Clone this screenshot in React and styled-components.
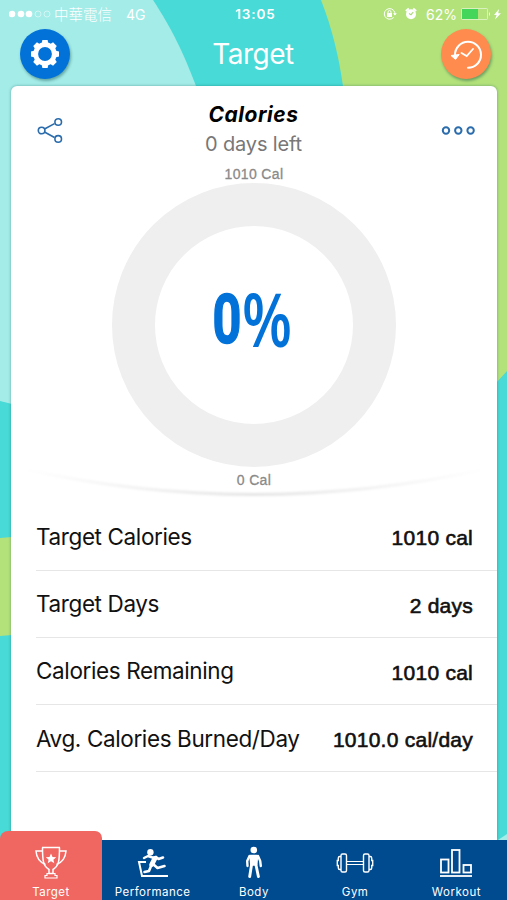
import React from "react";
import styled, { createGlobalStyle } from "styled-components";

const GlobalStyle = createGlobalStyle`
  * {
    box-sizing: border-box;
  }
  body {
    margin: 0;
    overflow: hidden;
    font-family: Inter, "Noto Sans CJK TC", sans-serif;
  }
  svg {
    display: block;
  }
`;
const Screen = styled.div`
  position: relative;
  display: flex;
  flex-direction: column;
  width: 507px;
  height: 900px;
  overflow: hidden;
  background: #48dad6;
`;
const Backdrop = styled.svg`
  position: absolute;
  top: 0;
  left: 0;
`;
const StatusBar = styled.div`
  position: relative;
  display: grid;
  grid-template-columns: 1fr auto 1fr;
  align-items: center;
  height: 28px;
  padding: 0 5px 0 9px;
  color: white;
  font-size: 13px;
`;
const StatusSide = styled.div`
  display: flex;
  align-items: center;
  justify-content: ${(props) => (props.$end ? "flex-end" : "flex-start")};
`;
const Carrier = styled.span`
  margin: 0 14px 0 2px;
  font-family: "Noto Sans CJK TC", sans-serif;
  font-size: 14.5px;
  font-weight: 300;
  line-height: 20px;
`;
const Network = styled.span`
  font-size: 14px;
`;
const Time = styled.span`
  font-weight: 600;
  font-size: 13.5px;
  letter-spacing: 0.9px;
`;
const Percent = styled.span`
  margin: 0 4px 0 8px;
  font-size: 14px;
`;
const Header = styled.header`
  position: relative;
  display: flex;
  justify-content: space-between;
  height: 58px;
  padding: 1px 16px 0 20px;
`;
const RoundButton = styled.button`
  display: flex;
  align-items: center;
  justify-content: center;
  width: 50px;
  height: 50px;
  padding: 0;
  border: 0;
  border-radius: 50%;
  background: ${(props) => props.color};
  box-shadow: 1px 2px 3px rgba(0, 60, 60, 0.4);
`;
const Title = styled.h1`
  margin: 0 5px 0 0;
  color: white;
  font-size: 28px;
  font-weight: 400;
  line-height: 50px;
  letter-spacing: -0.5px;
`;
const Card = styled.main`
  position: relative;
  display: flex;
  flex-direction: column;
  height: 754px;
  margin: 0 10px 0 11px;
  border-radius: 6px 6px 0 0;
  background: white;
  box-shadow: 0 0 3px rgba(0, 80, 80, 0.45);
`;
const Summary = styled.section`
  display: flex;
  flex-direction: column;
  height: 417.4px;
`;
const CardTop = styled.div`
  display: flex;
  justify-content: space-between;
  height: 80px;
  padding: 0 22px 0 26px;
  > svg {
    margin-top: 31px;
  }
`;
const Heading = styled.div`
  display: flex;
  flex-direction: column;
  align-items: center;
  padding: 15px 0 0 2px;
`;
const Name = styled.h2`
  margin: 0;
  font-size: 21px;
  font-style: italic;
  font-weight: 700;
  line-height: 28px;
  letter-spacing: 0.5px;
`;
const Left = styled.span`
  color: #777;
  font-size: 20px;
  line-height: 31px;
  letter-spacing: -0.15px;
`;
const ScaleLabel = styled.span`
  height: 17px;
  color: #8a8a8a;
  font-family: "Liberation Sans", sans-serif;
  font-size: 14px;
  line-height: 17px;
  letter-spacing: 0.35px;
  text-align: center;
  -webkit-text-stroke: 0.3px #8a8a8a;
`;
const Ring = styled.div`
  display: flex;
  align-items: center;
  justify-content: center;
  align-self: center;
  width: 284px;
  height: 284px;
  margin-bottom: 5px;
  border: 43px solid #efefef;
  border-radius: 50%;
`;
const Progress = styled.div`
  display: flex;
  align-items: center;
  height: 84px;
  margin: -11px 0 0 -2px;
  color: #0272d9;
  font-size: 69px;
  line-height: 84px;
`;
const Amount = styled.span`
  display: flex;
  justify-content: center;
  width: 28px;
  font-family: Roboto, sans-serif;
  font-weight: 700;
  -webkit-text-stroke: 1.5px #0272d9;
  transform: scaleX(0.73);
`;
const Unit = styled.span`
  display: flex;
  justify-content: center;
  width: 52px;
  margin-top: -4px;
  font-family: "Open Sans", sans-serif;
  font-weight: 600;
  transform: scale(0.84, 1.07);
`;
const Curve = styled.svg`
  position: absolute;
  top: 368.5px;
  left: 0;
`;
const Row = styled.div`
  display: flex;
  align-items: center;
  justify-content: space-between;
  height: 67.2px;
  margin-left: 25px;
  padding-right: 24px;
  border-bottom: 1px solid #e6e6e6;
`;
const Label = styled.span`
  color: #111;
  font-size: 22.5px;
  letter-spacing: -0.38px;
`;
const Value = styled.span`
  padding-top: 4px;
  color: #111;
  font-family: "Liberation Sans", sans-serif;
  font-size: 21px;
  letter-spacing: 0.25px;
  -webkit-text-stroke: 0.6px #111;
`;
const TabBar = styled.nav`
  position: relative;
  display: grid;
  grid-template-columns: 102px repeat(4, 1fr);
  grid-template-rows: 60px;
  align-items: end;
  height: 60px;
  background: #004a8f;
`;
const Tab = styled.div`
  display: flex;
  flex-direction: column;
  align-items: center;
  justify-content: flex-end;
  height: ${(props) => (props.$active ? 69 : 60)}px;
  border-radius: ${(props) => (props.$active ? "8px 7px 0 0" : 0)};
  background: ${(props) => (props.$active ? "#f06661" : "none")};
  color: white;
`;
const TabLabel = styled.span`
  margin-top: 4px;
  font-size: 11.5px;
  line-height: 16px;
  letter-spacing: 0.5px;
`;

const rows = [
  { label: "Target Calories", value: "1010 cal" },
  { label: "Target Days", value: "2 days" },
  { label: "Calories Remaining", value: "1010 cal" },
  { label: "Avg. Calories Burned/Day", value: "1010.0 cal/day" },
];

const SignalDots = () => (
  <svg width="43" height="10" fill="none" stroke="white">
    {[3, 12, 20].map((x) => (
      <circle key={x} cx={x} cy="5" r="3.3" fill="white" stroke="none" />
    ))}
    <circle cx="29" cy="5" r="3" strokeWidth="0.7" opacity="0.7" />
    <circle cx="38" cy="5" r="3" strokeWidth="0.7" opacity="0.7" />
  </svg>
);

const StatusIcons = () => (
  <svg width="35" height="14" fill="none" stroke="white">
    <path d="M10.6 10.4a5.3 5.3 0 1 1 1.2-2.4" strokeWidth="1" />
    <path d="m10 6.2 1.9 2.2 1.9-2.2Z" fill="white" stroke="none" />
    <rect x="4" y="6" width="5" height="4" fill="white" stroke="none" />
    <path d="M5 6.2V5a1.5 1.5 0 0 1 3 0v1.2" />
    <circle cx="28" cy="7.3" r="5" fill="white" stroke="none" />
    <path d="m22.8 4 3-2.5M33.2 4l-3-2.5" strokeWidth="1.7" />
    <path d="M30.3 5 28 7.7l-2-1.1" stroke="#a9d975" strokeWidth="1.1" />
  </svg>
);

const Battery = () => (
  <svg width="41" height="14">
    <rect x="0.5" y="1.5" width="26" height="11" rx="1" fill="none" stroke="white" opacity="0.5" />
    <rect x="1" y="2" width="16" height="10" fill="#43d65b" />
    <path d="M28 5q2 2 0 4Z" fill="white" />
    <path d="m38 2-5 6h2.6L34 12.5l6-6.2h-2.8Z" fill="white" />
  </svg>
);

const GearIcon = () => (
  <svg width="30" height="30" viewBox="-15 -15 30 30" fill="white">
    <circle r="9.3" fill="none" stroke="white" strokeWidth="4.8" />
    {[0, 45, 90, 135, 180, 225, 270, 315].map((angle) => (
      <path key={angle} d="M-3.5-10-2.6-14h5.2l.9 4Z" transform={`rotate(${angle})`} />
    ))}
  </svg>
);

const HistoryIcon = () => (
  <svg width="34" height="34" viewBox="0 0 34 34" fill="none" stroke="white" strokeWidth="2">
    <path d="M6 18a13 13 0 1 1 13 12.8" strokeLinecap="round" />
    <path d="m2 18.5 8.2-1-3.7 4.9Z" fill="white" strokeWidth="1" strokeLinejoin="round" />
    <path d="m12.5 16 5.2 3 6.3-7" strokeWidth="1.8" strokeLinecap="round" />
  </svg>
);

const ShareIcon = () => (
  <svg width="27" height="27" fill="none" stroke="#2a6cac" strokeWidth="1.6">
    <path d="m7.5 12 10-5.4M7.5 15l10 5.5" />
    <circle cx="4.6" cy="13.5" r="3.3" />
    <circle cx="21.2" cy="5" r="3.3" />
    <circle cx="21.2" cy="21.9" r="3.3" />
  </svg>
);

const MoreIcon = () => (
  <svg width="34" height="27" fill="none" stroke="#2a6cac" strokeWidth="2">
    <circle cx="5" cy="13.5" r="3.2" />
    <circle cx="17.3" cy="13.5" r="3.2" />
    <circle cx="29.6" cy="13.5" r="3.2" />
  </svg>
);

const TrophyIcon = () => (
  <svg width="34" height="34" fill="none" stroke="white" strokeWidth="1.5">
    <path d="M8 1.5h18M8.5 1.5C8.5 14 9 20 15 23.5v4h4v-4C25 20 25.5 14 25.5 1.5" />
    <path d="M8.5 5H2C2.5 12 5 16 11.5 18.5M25.5 5H32C31.5 12 29 16 22.5 18.5" />
    <path d="M13 27.5h8v2h2V32H11v-2.5h2Z" strokeWidth="1.2" />
    <path d="m17 7.500 1.500 3.500 3.700.3-2.800 2.400.9 3.600-3.300-2-3.300 2 .9-3.600-2.800-2.400 3.700-.3Z" fill="white" stroke="none" />
  </svg>
);

const RunnerIcon = () => (
  <svg width="34" height="34" fill="none" stroke="white" strokeWidth="2" strokeLinecap="round" strokeLinejoin="round">
    <path d="M9 16H3l3 14h25" strokeLinecap="square" strokeLinejoin="miter" />
    <circle cx="14.4" cy="6.3" r="3.2" fill="white" stroke="none" />
    <path d="m8 12 4-2 6 2" strokeWidth="2.4" />
    <path d="m18.8 12.5-3 6" strokeWidth="5" />
    <path d="m20 11 2.5 2 4.5-1.5M15 20l-2 5-4.5 1M17 18l4.5 4 7-2" strokeWidth="2.6" />
  </svg>
);

const BodyIcon = () => (
  <svg width="34" height="34" fill="none" stroke="white" strokeLinecap="round" strokeLinejoin="round">
    <circle cx="16.8" cy="4" r="3.3" fill="white" stroke="none" />
    <path d="M13.5 10h6.500l-.7 8.500h-5Z" fill="white" strokeWidth="2.500" />
    <path d="m12.500 10-2.300 5 .3 5M21 10l2.200 5 .6 5" strokeWidth="2.400" />
    <path d="m14.500 19-1.800 11.500M19 19l2.400 11.500" strokeWidth="2.900" />
  </svg>
);

const GymIcon = () => (
  <svg width="38" height="34" fill="none" stroke="white" strokeWidth="1.4">
    <rect x="5" y="8" width="5.5" height="18" rx="1.5" />
    <rect x="27.5" y="8" width="5.5" height="18" rx="1.5" />
    <path d="M5 10.5H3.8q-1.5 0-1.5 1.5v2.5h-1v5h1V22q0 1.5 1.5 1.5H5M33 10.5h1.2q1.5 0 1.5 1.5v2.5h1v5h-1V22q0 1.5-1.5 1.5H33" />
    <path d="M10.5 15.5h17M10.5 18.5h17" strokeWidth="1.2" />
  </svg>
);

const WorkoutIcon = () => (
  <svg width="34" height="34" fill="none" stroke="white" strokeWidth="1.8">
    <rect x="2" y="13.5" width="7.5" height="13" />
    <rect x="13" y="4" width="7.5" height="22.5" />
    <rect x="24.5" y="19" width="7.5" height="7.5" />
    <path d="M1 30h32" />
  </svg>
);

const tabs = [
  { name: "Target", Icon: TrophyIcon, active: true },
  { name: "Performance", Icon: RunnerIcon },
  { name: "Body", Icon: BodyIcon },
  { name: "Gym", Icon: GymIcon },
  { name: "Workout", Icon: WorkoutIcon },
];

const App = () => {
  return (
    <Screen>
      <GlobalStyle />
      <Backdrop width="507" height="900">
        <path d="M0 0h153C172 29 183 52 196 86L12 404 0 401Z" fill="#a4ece8" />
        <path d="M321 0C333 31 339 58 343 86L496 383l11-12V0Z" fill="#b3e27b" />
        <path d="M0 538l12-1v98l-12 1Z" fill="#b3e27b" />
        <path d="M507 834v6h-9Z" fill="#a4ece8" />
      </Backdrop>
      <StatusBar>
        <StatusSide>
          <SignalDots />
          <Carrier>中華電信</Carrier>
          <Network>4G</Network>
        </StatusSide>
        <Time>13:05</Time>
        <StatusSide $end>
          <StatusIcons />
          <Percent>62%</Percent>
          <Battery />
        </StatusSide>
      </StatusBar>
      <Header>
        <RoundButton color="#0272d9">
          <GearIcon />
        </RoundButton>
        <Title>Target</Title>
        <RoundButton color="#ff8b4e">
          <HistoryIcon />
        </RoundButton>
      </Header>
      <Card>
        <Curve width="486" height="50">
          <defs>
            <linearGradient id="fade" gradientUnits="userSpaceOnUse" x1="12" y1="0" x2="475" y2="0">
              <stop offset="0" stopColor="#000" stopOpacity="0" />
              <stop offset="0.5" stopColor="#000" stopOpacity="0.1" />
              <stop offset="1" stopColor="#000" stopOpacity="0" />
            </linearGradient>
            <filter id="soft" x="0" y="0" width="486" height="50" filterUnits="userSpaceOnUse">
              <feGaussianBlur stdDeviation="0.8" />
            </filter>
          </defs>
          <path d="M12 14Q243 65 475 14" fill="none" stroke="url(#fade)" strokeWidth="3" filter="url(#soft)" />
        </Curve>
        <Summary>
          <CardTop>
            <ShareIcon />
            <Heading>
              <Name>Calories</Name>
              <Left>0 days left</Left>
            </Heading>
            <MoreIcon />
          </CardTop>
          <ScaleLabel>1010 Cal</ScaleLabel>
          <Ring>
            <Progress>
              <Amount>0</Amount>
              <Unit>%</Unit>
            </Progress>
          </Ring>
          <ScaleLabel>0 Cal</ScaleLabel>
        </Summary>
        {rows.map((row) => (
          <Row key={row.label}>
            <Label>{row.label}</Label>
            <Value>{row.value}</Value>
          </Row>
        ))}
      </Card>
      <TabBar>
        {tabs.map(({ name, Icon, active }) => (
          <Tab key={name} $active={active}>
            <Icon />
            <TabLabel>{name}</TabLabel>
          </Tab>
        ))}
      </TabBar>
    </Screen>
  );
};
export default App;
